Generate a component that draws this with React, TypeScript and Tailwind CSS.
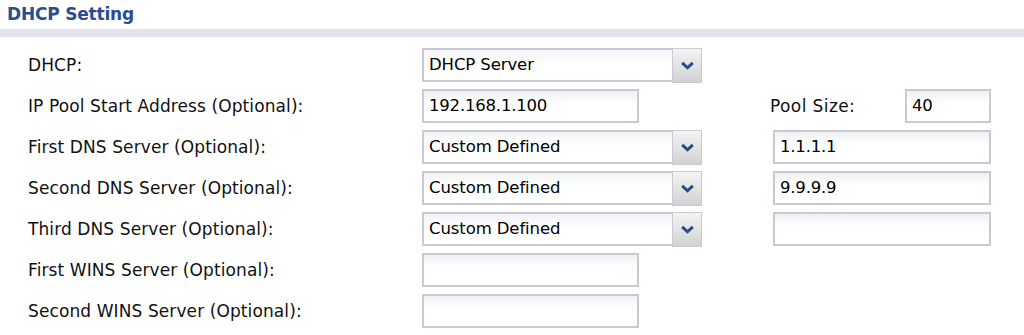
import React from "react";

const font = { fontFamily: '"DejaVu Sans", Verdana, sans-serif' };

function Select({ value }: { value: string }) {
  return (
    <div className="flex h-[34px] w-[280px] border-2 border-[#c9c9d6] bg-gradient-to-b from-[#f3f4f6] via-white to-white">
      <div className="flex flex-1 items-center pl-[5px] pt-[2px] text-[16.5px] tracking-[-0.1px] text-black">{value}</div>
      <div className="-mb-[3px] -mr-[2px] -mt-[2px] flex w-[30px] items-center justify-center border border-[#c9c9d6] bg-gradient-to-b from-[#f4f4f4] to-[#d2d2d2]">
        <svg width="13" height="9" viewBox="0 0 13 9">
          <path d="M1.2 1.8 L6.5 6.8 L11.8 1.8" fill="none" stroke="#2d4a86" strokeWidth="3" strokeLinejoin="miter" />
        </svg>
      </div>
    </div>
  );
}

function Input({ value, w }: { value?: string; w: string }) {
  return (
    <div
      className={`flex h-[34px] items-center border-2 border-[#c9c9d6] bg-gradient-to-b from-[#eef0f2] to-white to-40% pl-[5px] pt-[2px] text-[16.5px] tracking-[-0.2px] text-black ${w}`}
    >
      {value}
    </div>
  );
}

function Row({ label, left, right }: { label: string; left: React.ReactNode; right?: React.ReactNode }) {
  return (
    <div className="flex h-[41px] items-center">
      <div className="w-[394px] pt-[2px] text-[17px] tracking-[0.1px] text-[#111]">{label}</div>
      <div className="w-[351px]">{left}</div>
      <div className="flex items-center">{right}</div>
    </div>
  );
}

export default function App() {
  return (
    <div className="h-[335px] w-[1024px] overflow-hidden bg-white" style={font}>
      <div className="flex h-[29px] items-center pl-[7px] text-[17px] font-bold tracking-[-0.2px] text-[#2b4c92]">
        DHCP Setting
      </div>
      <div className="h-[8px] bg-[#e1e4ec]" />
      <div className="pt-[7px] pl-[28px]">
        <Row label="DHCP:" left={<Select value="DHCP Server" />} />
        <Row
          label="IP Pool Start Address (Optional):"
          left={<Input value="192.168.1.100" w="w-[217px]" />}
          right={
            <div className="-ml-[3px] flex items-center">
              <div className="w-[135px] pt-[2px] text-[17px] tracking-[0.4px] text-[#111]">Pool Size:</div>
              <Input value="40" w="w-[86px]" />
            </div>
          }
        />
        <Row label="First DNS Server (Optional):" left={<Select value="Custom Defined" />} right={<Input value="1.1.1.1" w="w-[218px]" />} />
        <Row label="Second DNS Server (Optional):" left={<Select value="Custom Defined" />} right={<Input value="9.9.9.9" w="w-[218px]" />} />
        <Row label="Third DNS Server (Optional):" left={<Select value="Custom Defined" />} right={<Input w="w-[218px]" />} />
        <Row label="First WINS Server (Optional):" left={<Input w="w-[217px]" />} />
        <Row label="Second WINS Server (Optional):" left={<Input w="w-[217px]" />} />
      </div>
    </div>
  );
}
